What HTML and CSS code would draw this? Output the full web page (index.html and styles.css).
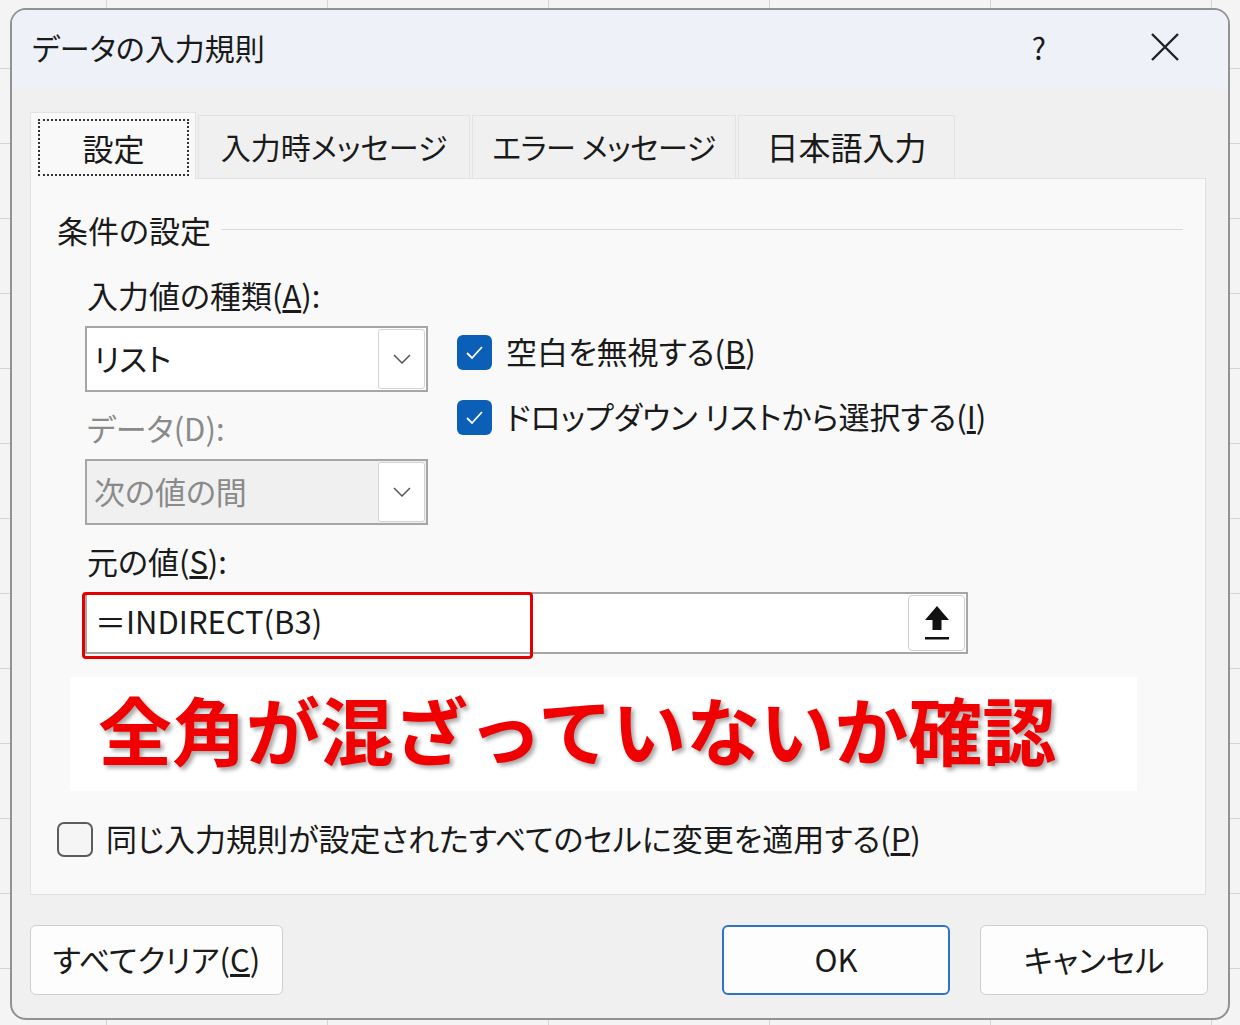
FILE: index.html
```html
<!DOCTYPE html>
<html lang="ja">
<head>
  <meta charset="UTF-8">
  <meta name="viewport" content="width=device-width, initial-scale=1.0">
  <title>データの入力規則</title>
  <link rel="stylesheet" href="styles.css">
</head>
<body>

  <div class="dialog">
    <!-- タイトルバー -->
    <div class="titlebar">
      <span class="title">データの入力規則</span>
      <span class="help">?</span>
      <span class="close">
        <svg width="30" height="30" viewBox="0 0 30 30"><path d="M2 2 L28 28 M28 2 L2 28" stroke="#222" stroke-width="2.4" fill="none"/></svg>
      </span>
    </div>

    <div class="content">
      <div class="tabs">
        <div class="tab active"><span class="focus">設定</span></div>
        <div class="tab tab-input">入力時メッセージ</div>
        <div class="tab tab-error">エラー メッセージ</div>
        <div class="tab tab-ime">日本語入力</div>
      </div>

      <div class="panel">
        <div class="group-title">
          <span>条件の設定</span>
          <div class="rule"></div>
        </div>

        <div class="criteria">
          <div class="col-left">
            <div class="label">入力値の種類(<u>A</u>):</div>
            <div class="select">
              <span class="value">リスト</span>
              <span class="drop-btn">
                <svg width="18" height="10" viewBox="0 0 18 10"><polyline points="1,1 9,9 17,1" stroke="#555" stroke-width="1.5" fill="none"/></svg>
              </span>
            </div>
            <div class="label disabled">データ(D):</div>
            <div class="select disabled">
              <span class="value">次の値の間</span>
              <span class="drop-btn">
                <svg width="18" height="10" viewBox="0 0 18 10"><polyline points="1,1 9,9 17,1" stroke="#555" stroke-width="1.5" fill="none"/></svg>
              </span>
            </div>
          </div>
          <div class="col-right">
            <div class="check">
              <span class="box checked">
                <svg width="35" height="35" viewBox="0 0 35 35"><polyline points="10,18 15,23 25,12" stroke="#fff" stroke-width="1.8" fill="none"/></svg>
              </span>
              <span>空白を無視する(<u>B</u>)</span>
            </div>
            <div class="check">
              <span class="box checked">
                <svg width="35" height="35" viewBox="0 0 35 35"><polyline points="10,18 15,23 25,12" stroke="#fff" stroke-width="1.8" fill="none"/></svg>
              </span>
              <span>ドロップダウン リストから選択する(<u>I</u>)</span>
            </div>
          </div>
        </div>

        <div class="source">
          <div class="label">元の値(<u>S</u>):</div>
          <div class="source-input">
            <span class="formula">＝INDIRECT(B3)</span>
            <span class="ref-btn">
              <svg width="24" height="34" viewBox="0 0 24 34"><path d="M12 0 L0 14 H7.5 V24 H16.5 V14 H24 Z" fill="#111"/><rect x="0" y="31" width="24" height="2.5" fill="#111"/></svg>
            </span>
            <span class="highlight"></span>
          </div>
        </div>

        <div class="note">全角が混ざっていないか確認</div>

        <div class="check apply">
          <span class="box"></span>
          <span>同じ入力規則が設定されたすべてのセルに変更を適用する(<u>P</u>)</span>
        </div>
      </div>

      <div class="footer">
        <button class="btn">すべてクリア(<u>C</u>)</button>
        <div class="spacer"></div>
        <button class="btn btn-ok">OK</button>
        <button class="btn">キャンセル</button>
      </div>
    </div>
  </div>

</body>
</html>
```

FILE: styles.css
```css
body {
  margin: 0;
  padding: 8px 0 0 10px;
  width: 1240px;
  height: 1025px;
  box-sizing: border-box;
  overflow: hidden;
  font-family: "Noto Sans CJK JP", "Noto Sans", sans-serif;
  font-feature-settings: "palt";
  color: #1a1a1a;
  background-color: #f4f4f4;
  background-image:
    linear-gradient(to right, #d4d4d4 1px, transparent 1px),
    linear-gradient(to bottom, #d4d4d4 1px, transparent 1px);
  background-size: 221px 75px;
  background-position: 106px 68px;
}

.dialog {
  width: 1220px;
  height: 1012px;
  box-sizing: border-box;
  border: 2px solid #929292;
  border-radius: 16px;
  background: #f0f0f0;
  overflow: hidden;
}

.titlebar {
  height: 78px;
  background: #eef1f8;
  display: flex;
  align-items: center;
  padding-left: 20px;
}

.title {
  flex: 1;
  font-size: 30px;
  margin-top: -4px;
}

.help {
  font-size: 30px;
  margin-right: 104px;
  margin-top: -4px;
}

.close {
  display: flex;
  margin-right: 48px;
  margin-top: -4px;
}

.content {
  padding: 0 22px 0 18px;
}

.tabs {
  display: flex;
  align-items: flex-end;
  gap: 2px;
  margin-top: 24px;
}

.tab {
  height: 63px;
  box-sizing: border-box;
  display: flex;
  align-items: center;
  justify-content: center;
  padding-bottom: 3px;
  font-size: 30px;
  background: #f0f0f0;
  border: 1px solid #e3e3e3;
  border-bottom: none;
}

.tab-input { width: 272px; }
.tab-error { width: 264px; letter-spacing: -0.5px; }
.tab-ime { width: 217px; font-size: 32px; }

.tab.active {
  width: 166px;
  height: 67px;
  padding: 6px 6px 3px 7px;
  background: #f9f9f9;
  margin-bottom: -1px;
  position: relative;
  z-index: 1;
  font-size: 31px;
}

.tab .focus {
  flex: 1;
  height: 100%;
  box-sizing: border-box;
  border: 2px dotted #333;
  display: flex;
  align-items: center;
  justify-content: center;
}

.panel {
  height: 717px;
  box-sizing: border-box;
  background: #f9f9f9;
  border: 1px solid #e0e0e0;
  padding: 30px 0 0 26px;
}

.group-title {
  display: flex;
  align-items: center;
  height: 40px;
  font-size: 31px;
  padding-right: 22px;
}

.group-title .rule {
  flex: 1;
  height: 1px;
  background: #dadada;
  margin-left: 10px;
}

.label {
  font-size: 31px;
  line-height: 40px;
  padding-left: 2px;
}

.label.disabled {
  color: #8a8a8a;
}

.criteria {
  display: flex;
  margin-left: 28px;
  margin-top: 26px;
}

.col-left {
  width: 343px;
}

.select {
  height: 66px;
  box-sizing: border-box;
  border: 2px solid #a6a6a6;
  background: #fff;
  display: flex;
  align-items: center;
  padding: 1px;
  margin-top: 11px;
}

.col-left .label.disabled {
  margin-top: 16px;
}

.select.disabled {
  background: #f0f0f0;
  color: #8a8a8a;
}

.select .value {
  flex: 1;
  font-size: 31px;
  padding-left: 6px;
  margin-top: -3px;
}

.drop-btn {
  width: 47px;
  height: 100%;
  box-sizing: border-box;
  border: 1px solid #d4d4d4;
  border-radius: 3px;
  background: #fff;
  display: flex;
  align-items: center;
  justify-content: center;
}

.col-right {
  margin-left: 29px;
  padding-top: 57px;
  display: flex;
  flex-direction: column;
  gap: 25px;
}

.check {
  display: flex;
  align-items: center;
  height: 40px;
  font-size: 31px;
}

.check > span:last-child {
  margin-top: -3px;
}

.box {
  width: 35px;
  height: 35px;
  box-sizing: border-box;
  border-radius: 6px;
  margin-right: 14px;
  display: flex;
}

.box.checked {
  background: #0c5fb6;
}

.source {
  margin-left: 28px;
  margin-top: 16px;
}

.source-input {
  position: relative;
  width: 883px;
  height: 62px;
  box-sizing: border-box;
  margin-top: 11px;
  border: 2px solid #a6a6a6;
  background: #fff;
  display: flex;
  align-items: center;
  padding-right: 1px;
}

.formula {
  flex: 1;
  font-size: 31px;
  padding-left: 8px;
  margin-top: -6px;
}

.ref-btn {
  width: 57px;
  height: 56px;
  box-sizing: border-box;
  border: 1px solid #cfcfcf;
  border-radius: 4px;
  background: #fff;
  display: flex;
  align-items: center;
  justify-content: center;
}

.highlight {
  position: absolute;
  left: -5px;
  top: -2px;
  width: 451px;
  height: 67px;
  box-sizing: border-box;
  border: 3px solid #e30000;
  border-radius: 4px;
}

.note {
  margin: 23px 0 0 13px;
  width: 1067px;
  height: 114px;
  box-sizing: border-box;
  background: #fff;
  padding: 0 0 14px 28px;
  display: flex;
  align-items: center;
  font-size: 74px;
  font-weight: 700;
  font-feature-settings: normal;
  color: #f00000;
  text-shadow: 3px 3px 4px rgba(0, 0, 0, 0.35);
}

.check.apply {
  margin-top: 28px;
}

.check.apply .box {
  width: 36px;
  border: 2px solid #5c5c5c;
  border-radius: 7px;
  background: #f5f5f5;
  margin-right: 13px;
}

.footer {
  display: flex;
  margin-top: 30px;
  gap: 30px;
  margin-right: -2px;
}

.spacer {
  flex: 1;
}

.btn {
  height: 70px;
  width: 228px;
  font-family: inherit;
  font-feature-settings: "palt";
  font-size: 31px;
  color: #1a1a1a;
  background: #fdfdfd;
  border: 1px solid #cfcfcf;
  border-radius: 6px;
  padding: 0 0 4px 0;
}

.btn:first-child {
  width: 253px;
}

.btn-ok {
  border: 2px solid #2f74c4;
}
```
